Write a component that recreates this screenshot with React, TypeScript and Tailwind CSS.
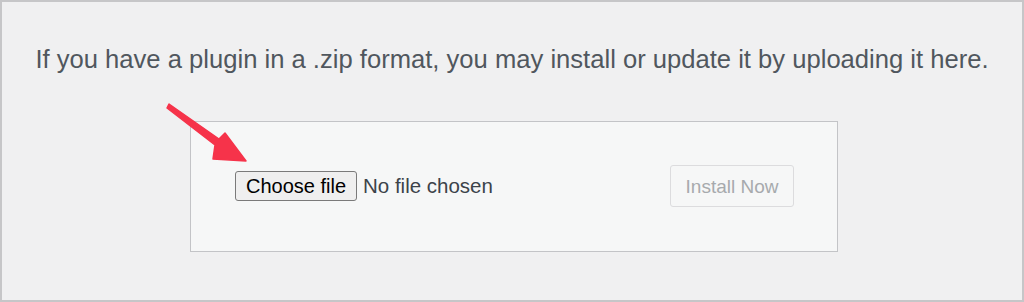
export default function App() {
  return (
    <div className="relative w-full h-[302px] overflow-hidden border-2 border-[#c6c6c8] bg-[#f0f0f1] font-['Liberation_Sans',Arial,sans-serif]">
      <p className="pt-[45px] text-center text-[25.6px] leading-none text-[#50575e]">
        If you have a plugin in a .zip format, you may install or update it by uploading it here.
      </p>

      <div className="ml-[188px] mt-[48px] flex h-[131px] w-[648px] items-center justify-between border border-[#c3c4c7] bg-[#f6f7f7] pl-[44px] pr-[43px]">
        <div className="flex items-center">
          <button className="h-[30px] w-[122px] rounded-[3px] border border-[#7a7a7a] bg-[#efefef] text-[20px] leading-none text-black">
            Choose file
          </button>
          <span className="ml-[6px] text-[20.5px] leading-none text-[#3c434a]">No file chosen</span>
        </div>
        <button className="h-[42px] w-[124px] rounded-[3px] border border-[#dcdcde] bg-[#f6f7f7] text-[19px] leading-none text-[#a7aaad]">
          Install Now
        </button>
      </div>

      <svg className="absolute left-0 top-0" width="300" height="200" viewBox="0 0 300 200">
        <path
          d="M167 102 L217 137 L223 131 L244 159 L211 157 L213 143 L165 106 Z"
          fill="#f6334a"
          stroke="#f6334a"
          strokeWidth="1.5"
          strokeLinejoin="round"
        />
      </svg>
    </div>
  );
}
